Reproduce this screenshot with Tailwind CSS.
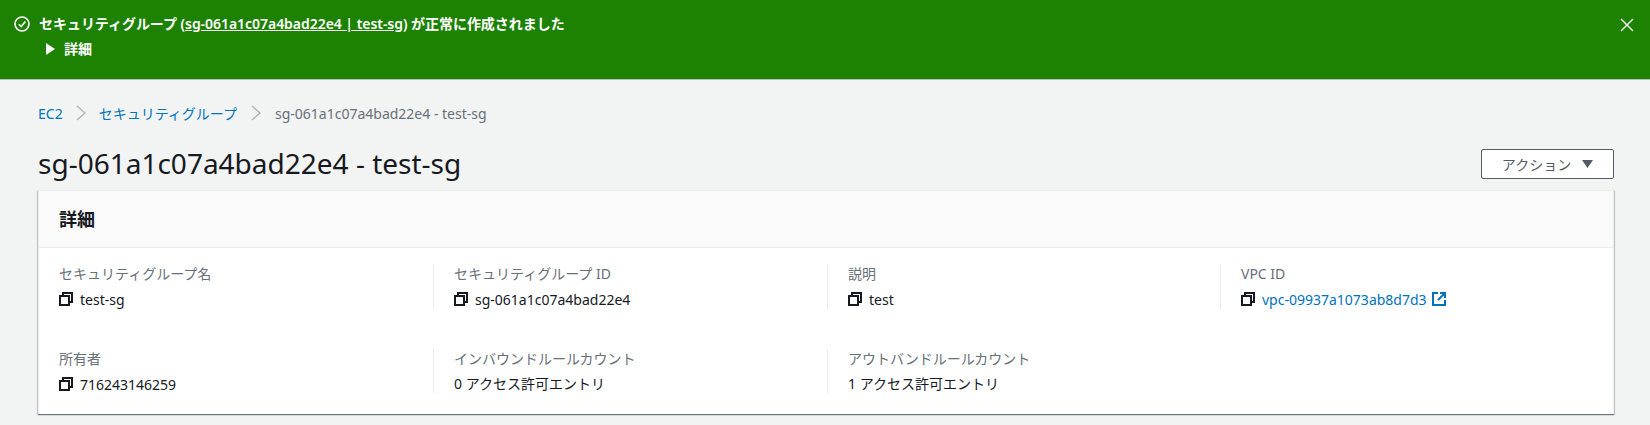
<!DOCTYPE html>
<html lang="ja">
<head>
  <meta charset="UTF-8" />
  <title>sg-061a1c07a4bad22e4 - test-sg</title>
  <script src="https://cdn.jsdelivr.net/npm/@tailwindcss/browser@4"></script>
</head>
<body class="bg-[#f2f3f3] text-[#16191f] text-[14px] font-['Noto_Sans','Noto_Sans_CJK_JP',sans-serif] h-[425px] overflow-hidden">
  <!-- Flash banner -->
  <div class="h-[80px] bg-[#1d8102] border-b border-[#b9bfc0] text-white flex justify-between pl-[14px] pr-[15px] pt-[15px]">
    <div class="flex">
      <svg class="w-[16px] h-[16px] mt-[1px]" viewBox="0 0 16 16" fill="none" stroke="white" stroke-width="1.6">
        <circle cx="8" cy="8" r="7" />
        <path d="M4.8 8.2 7.2 10.6 11.4 5.4" />
      </svg>
      <div class="ml-[9px]">
        <p class="h-[20px] leading-[18px] font-semibold tracking-[-0.04px]">セキュリティグループ (<a href="#" class="underline">sg-061a1c07a4bad22e4 | test-sg</a>) が正常に作成されました</p>
        <p class="flex items-center mt-[4px] ml-[7px] h-[20px] text-[14px] leading-[20px] font-bold">
          <svg class="w-[9px] h-[12px] mr-[9px]" viewBox="0 0 9 12" fill="white"><path d="M0 0 9 6 0 12Z" /></svg>
          詳細
        </p>
      </div>
    </div>
    <svg class="w-[14px] h-[14px] mt-[3px] mr-[1px]" viewBox="0 0 14 14" fill="none" stroke="#e8f0e4" stroke-width="1.5"><path d="M1 1 13 13M13 1 1 13" /></svg>
  </div>

  <main class="pl-[38px] pr-[36px]">
    <!-- Breadcrumbs -->
    <nav class="flex items-center h-[20px] mt-[23px]">
      <a href="#" class="text-[#0073bb]">EC2</a>
      <svg class="w-[10px] h-[16px] ml-[13px] mr-[13px]" viewBox="0 0 10 16" fill="none" stroke="#aab7b8" stroke-width="1.5"><path d="M1 1 9 8 1 15" /></svg>
      <a href="#" class="text-[#0073bb]">セキュリティグループ</a>
      <svg class="w-[10px] h-[16px] mx-[14px]" viewBox="0 0 10 16" fill="none" stroke="#aab7b8" stroke-width="1.5"><path d="M1 1 9 8 1 15" /></svg>
      <span class="text-[#687078]">sg-061a1c07a4bad22e4 - test-sg</span>
    </nav>

    <!-- Title row -->
    <div class="flex justify-between items-start mt-[26px] h-[41px]">
      <h1 class="text-[28px] leading-[28px]">sg-061a1c07a4bad22e4 - test-sg</h1>
      <button class="w-[133px] h-[30px] bg-white border border-[#545b64] rounded-[2px] text-[#545b64] flex items-center justify-center">
        アクション
        <svg class="w-[11px] h-[8px] ml-[11px]" viewBox="0 0 11 8" fill="#545b64"><path d="M0 0H11L5.5 8Z" /></svg>
      </button>
    </div>

    <!-- Details card -->
    <section class="bg-white border border-[#eaeded] border-b-0 shadow-[0_1px_1px_0_rgba(0,28,36,0.4),1px_1px_1px_0_rgba(0,28,36,0.15),-1px_1px_1px_0_rgba(0,28,36,0.15)] h-[224px]">
      <h2 class="h-[57px] bg-[#fafafa] border-b border-[#eaeded] pl-[20px] flex items-center text-[18px] font-bold">詳細</h2>
      <div class="grid grid-cols-[374px_394px_393px_1fr] gap-y-[40px] pl-[20px] pt-[16px]">
        <div class="h-[45px]">
          <p class="text-[#687078] leading-[20px]">セキュリティグループ名</p>
          <p class="flex items-center h-[20px] mt-[5px]"><svg class="w-[14px] h-[14px] mr-[7px]" viewBox="0 0 14 14" fill="none" stroke="#16191f" stroke-width="2"><path d="M1 4H10V13H1ZM4 4V1H13V10H10" /></svg>test-sg</p>
        </div>
        <div class="h-[45px] border-l border-[#eaeded] pl-[20px]">
          <p class="text-[#687078] leading-[20px]">セキュリティグループ ID</p>
          <p class="flex items-center h-[20px] mt-[5px]"><svg class="w-[14px] h-[14px] mr-[7px]" viewBox="0 0 14 14" fill="none" stroke="#16191f" stroke-width="2"><path d="M1 4H10V13H1ZM4 4V1H13V10H10" /></svg>sg-061a1c07a4bad22e4</p>
        </div>
        <div class="h-[45px] border-l border-[#eaeded] pl-[20px]">
          <p class="text-[#687078] leading-[20px]">説明</p>
          <p class="flex items-center h-[20px] mt-[5px]"><svg class="w-[14px] h-[14px] mr-[7px]" viewBox="0 0 14 14" fill="none" stroke="#16191f" stroke-width="2"><path d="M1 4H10V13H1ZM4 4V1H13V10H10" /></svg>test</p>
        </div>
        <div class="h-[45px] border-l border-[#eaeded] pl-[20px]">
          <p class="text-[#687078] leading-[20px]">VPC ID</p>
          <p class="flex items-center h-[20px] mt-[5px]"><svg class="w-[14px] h-[14px] mr-[7px]" viewBox="0 0 14 14" fill="none" stroke="#16191f" stroke-width="2"><path d="M1 4H10V13H1ZM4 4V1H13V10H10" /></svg><a href="#" class="text-[#0073bb]">vpc-09937a1073ab8d7d3</a>
            <svg class="w-[14px] h-[14px] ml-[5px]" viewBox="0 0 14 14" fill="none" stroke="#0073bb" stroke-width="2"><path d="M6 1H1V13H13V8M8 1H13V6M13 1 6 8" /></svg>
          </p>
        </div>
        <div class="h-[45px]">
          <p class="text-[#687078] leading-[20px]">所有者</p>
          <p class="flex items-center h-[20px] mt-[5px]"><svg class="w-[14px] h-[14px] mr-[7px]" viewBox="0 0 14 14" fill="none" stroke="#16191f" stroke-width="2"><path d="M1 4H10V13H1ZM4 4V1H13V10H10" /></svg>716243146259</p>
        </div>
        <div class="h-[45px] border-l border-[#eaeded] pl-[20px]">
          <p class="text-[#687078] leading-[20px]">インバウンドルールカウント</p>
          <p class="h-[20px] leading-[20px] mt-[5px]">0 アクセス許可エントリ</p>
        </div>
        <div class="h-[45px] border-l border-[#eaeded] pl-[20px]">
          <p class="text-[#687078] leading-[20px]">アウトバンドルールカウント</p>
          <p class="h-[20px] leading-[20px] mt-[5px]">1 アクセス許可エントリ</p>
        </div>
      </div>
    </section>
  </main>
</body>
</html>
